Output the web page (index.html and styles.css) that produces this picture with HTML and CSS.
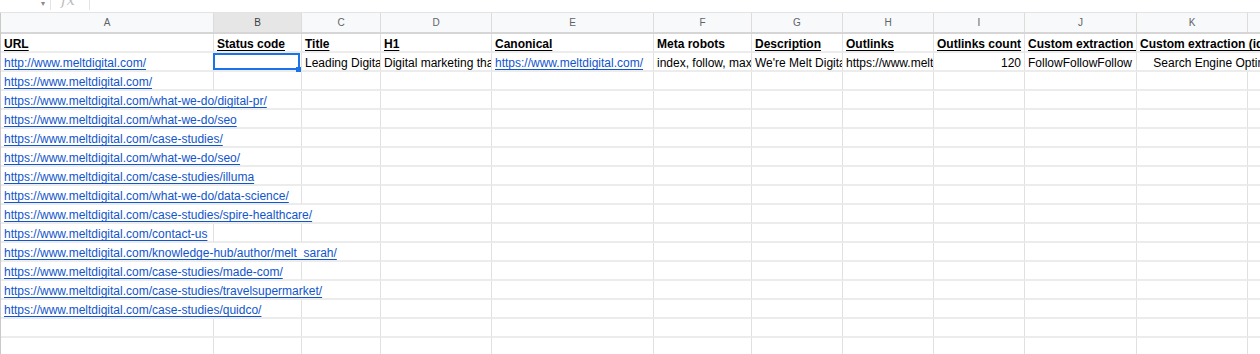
FILE: index.html
```html
<!DOCTYPE html>
<html lang="en">
<head>
<meta charset="utf-8">
<title>Crawl sheet</title>
<link rel="stylesheet" href="styles.css">
</head>
<body>
<div class="app">
  <div class="formula-bar">
    <span class="name-arrow">▾</span>
    <span class="fb-sep"></span>
    <span class="fx">fx</span>
    <span class="fb-sep"></span>
  </div>
  <div class="sheet">
    <div class="grid col-heads">
      <div class="ch">A</div><div class="ch ch-sel">B</div><div class="ch">C</div><div class="ch">D</div><div class="ch">E</div><div class="ch">F</div><div class="ch">G</div><div class="ch">H</div><div class="ch">I</div><div class="ch">J</div><div class="ch">K</div><div class="ch"></div>
    </div>
    <div class="grid body">
      <!-- row 1 -->
      <div class="c h"><u>URL</u></div>
      <div class="c h"><u>Status code</u></div>
      <div class="c h"><u>Title</u></div>
      <div class="c h"><u>H1</u></div>
      <div class="c h"><u>Canonical</u></div>
      <div class="c h">Meta robots</div>
      <div class="c h"><u>Description</u></div>
      <div class="c h"><u>Outlinks</u></div>
      <div class="c h"><u>Outlinks count</u></div>
      <div class="c h"><u>Custom extraction </u></div>
      <div class="c h s2"><u>Custom extraction (id)</u></div>
      <!-- row 2 -->
      <div class="c"><a href="#">http://www.meltdigital.com/</a></div>
      <div class="c sel"><span class="sel-box"></span><span class="sel-handle"></span></div>
      <div class="c">Leading Digital Marketing Agency | Melt Digital</div>
      <div class="c">Digital marketing that delivers results</div>
      <div class="c"><a href="#">https://www.meltdigital.com/</a></div>
      <div class="c">index, follow, max-image-preview:large</div>
      <div class="c">We're Melt Digital, a digital marketing agency</div>
      <div class="c">https://www.meltdigital.com/what-we-do/</div>
      <div class="c num">120</div>
      <div class="c">FollowFollowFollow</div>
      <div class="c s2">    Search Engine Optimisation</div>
      <!-- row 3 -->
      <div class="c"><a href="#">https://www.meltdigital.com/</a></div>
      <div class="c"></div><div class="c"></div><div class="c"></div><div class="c"></div><div class="c"></div><div class="c"></div><div class="c"></div><div class="c"></div><div class="c"></div><div class="c"></div><div class="c"></div>
      <!-- row 4 -->
      <div class="c s2"><a href="#">https://www.meltdigital.com/what-we-do/digital-pr/</a></div>
      <div class="c"></div><div class="c"></div><div class="c"></div><div class="c"></div><div class="c"></div><div class="c"></div><div class="c"></div><div class="c"></div><div class="c"></div><div class="c"></div>
      <!-- row 5 -->
      <div class="c s2"><a href="#">https://www.meltdigital.com/what-we-do/seo</a></div>
      <div class="c"></div><div class="c"></div><div class="c"></div><div class="c"></div><div class="c"></div><div class="c"></div><div class="c"></div><div class="c"></div><div class="c"></div><div class="c"></div>
      <!-- row 6 -->
      <div class="c s2"><a href="#">https://www.meltdigital.com/case-studies/</a></div>
      <div class="c"></div><div class="c"></div><div class="c"></div><div class="c"></div><div class="c"></div><div class="c"></div><div class="c"></div><div class="c"></div><div class="c"></div><div class="c"></div>
      <!-- row 7 -->
      <div class="c s2"><a href="#">https://www.meltdigital.com/what-we-do/seo/</a></div>
      <div class="c"></div><div class="c"></div><div class="c"></div><div class="c"></div><div class="c"></div><div class="c"></div><div class="c"></div><div class="c"></div><div class="c"></div><div class="c"></div>
      <!-- row 8 -->
      <div class="c s2"><a href="#">https://www.meltdigital.com/case-studies/illuma</a></div>
      <div class="c"></div><div class="c"></div><div class="c"></div><div class="c"></div><div class="c"></div><div class="c"></div><div class="c"></div><div class="c"></div><div class="c"></div><div class="c"></div>
      <!-- row 9 -->
      <div class="c s2"><a href="#">https://www.meltdigital.com/what-we-do/data-science/</a></div>
      <div class="c"></div><div class="c"></div><div class="c"></div><div class="c"></div><div class="c"></div><div class="c"></div><div class="c"></div><div class="c"></div><div class="c"></div><div class="c"></div>
      <!-- row 10 -->
      <div class="c s3"><a href="#">https://www.meltdigital.com/case-studies/spire-healthcare/</a></div>
      <div class="c"></div><div class="c"></div><div class="c"></div><div class="c"></div><div class="c"></div><div class="c"></div><div class="c"></div><div class="c"></div><div class="c"></div>
      <!-- row 11 -->
      <div class="c"><a href="#">https://www.meltdigital.com/contact-us</a></div>
      <div class="c"></div><div class="c"></div><div class="c"></div><div class="c"></div><div class="c"></div><div class="c"></div><div class="c"></div><div class="c"></div><div class="c"></div><div class="c"></div><div class="c"></div>
      <!-- row 12 -->
      <div class="c s3"><a href="#">https://www.meltdigital.com/knowledge-hub/author/melt_sarah/</a></div>
      <div class="c"></div><div class="c"></div><div class="c"></div><div class="c"></div><div class="c"></div><div class="c"></div><div class="c"></div><div class="c"></div><div class="c"></div>
      <!-- row 13 -->
      <div class="c s2"><a href="#">https://www.meltdigital.com/case-studies/made-com/</a></div>
      <div class="c"></div><div class="c"></div><div class="c"></div><div class="c"></div><div class="c"></div><div class="c"></div><div class="c"></div><div class="c"></div><div class="c"></div><div class="c"></div>
      <!-- row 14 -->
      <div class="c s3"><a href="#">https://www.meltdigital.com/case-studies/travelsupermarket/</a></div>
      <div class="c"></div><div class="c"></div><div class="c"></div><div class="c"></div><div class="c"></div><div class="c"></div><div class="c"></div><div class="c"></div><div class="c"></div>
      <!-- row 15 -->
      <div class="c s2"><a href="#">https://www.meltdigital.com/case-studies/quidco/</a></div>
      <div class="c"></div><div class="c"></div><div class="c"></div><div class="c"></div><div class="c"></div><div class="c"></div><div class="c"></div><div class="c"></div><div class="c"></div><div class="c"></div>
      <!-- row 16 -->
      <div class="c"></div><div class="c"></div><div class="c"></div><div class="c"></div><div class="c"></div><div class="c"></div><div class="c"></div><div class="c"></div><div class="c"></div><div class="c"></div><div class="c"></div><div class="c"></div>
      <!-- row 17 -->
      <div class="c"></div><div class="c"></div><div class="c"></div><div class="c"></div><div class="c"></div><div class="c"></div><div class="c"></div><div class="c"></div><div class="c"></div><div class="c"></div><div class="c"></div><div class="c"></div>
    </div>
  </div>
</div>
</body>
</html>
```
FILE: styles.css
```css
html, body {
  margin: 0;
  padding: 0;
  background: #ffffff;
}

.app {
  width: 1260px;
  height: 354px;
  overflow: hidden;
  font-family: "Liberation Sans", Arial, sans-serif;
  color: #000000;
}

.formula-bar {
  height: 12px;
  border-bottom: 1px solid #e3e3e3;
  display: flex;
  align-items: flex-start;
  overflow: hidden;
  box-sizing: content-box;
}

.name-arrow {
  margin-left: 41px;
  font-size: 8px;
  line-height: 8px;
  color: #8a8a8a;
}

.fb-sep {
  width: 1px;
  height: 10px;
  background: #e3e3e3;
}

.name-arrow + .fb-sep {
  margin-left: 5px;
}

.fx {
  margin-left: 10px;
  width: 28px;
  font-family: "DejaVu Serif", "Liberation Serif", serif;
  font-style: italic;
  font-size: 15px;
  line-height: 15px;
  margin-top: -7px;
  color: #bdbdbd;
}

.sheet {
  border-left: 1px solid #c9c9c9;
}

.grid {
  display: grid;
  grid-template-columns: 213px 88px 79px 111px 162px 98px 91px 91px 91px 112px 111px 120px;
}

.col-heads {
  background: #f8f9fa;
  border-bottom: 2px solid #d6d6d6;
}

.ch {
  height: 19px;
  box-sizing: border-box;
  border-right: 1px solid #dcdcdc;
  font-size: 10px;
  line-height: 19px;
  text-align: center;
  color: #5f6368;
}

.ch-sel {
  background: #e6e6e6;
  color: #3c4043;
}

.c {
  position: relative;
  height: 19px;
  box-sizing: border-box;
  border-right: 1px solid #e1e1e1;
  border-bottom: 2px solid #ececec;
  padding: 3px 3px 0;
  font-size: 12px;
  line-height: 15px;
  white-space: pre;
  overflow: hidden;
}

.c.sel {
  overflow: visible;
}

.h {
  font-weight: bold;
}

.h u {
  text-decoration-thickness: 1px;
  text-underline-offset: 2px;
}

.num {
  text-align: right;
}

.s2 {
  grid-column: span 2;
}

.s3 {
  grid-column: span 3;
}

.c a {
  color: #1155cc;
  text-decoration: underline;
  text-underline-offset: 2px;
}

.sel-box {
  position: absolute;
  left: -1px;
  top: 0;
  right: 1px;
  bottom: 0;
  border: 2px solid #1a73e8;
  z-index: 2;
}

.sel-handle {
  position: absolute;
  width: 5px;
  height: 5px;
  right: 0;
  bottom: -2px;
  background: #1a73e8;
  z-index: 3;
}
```
